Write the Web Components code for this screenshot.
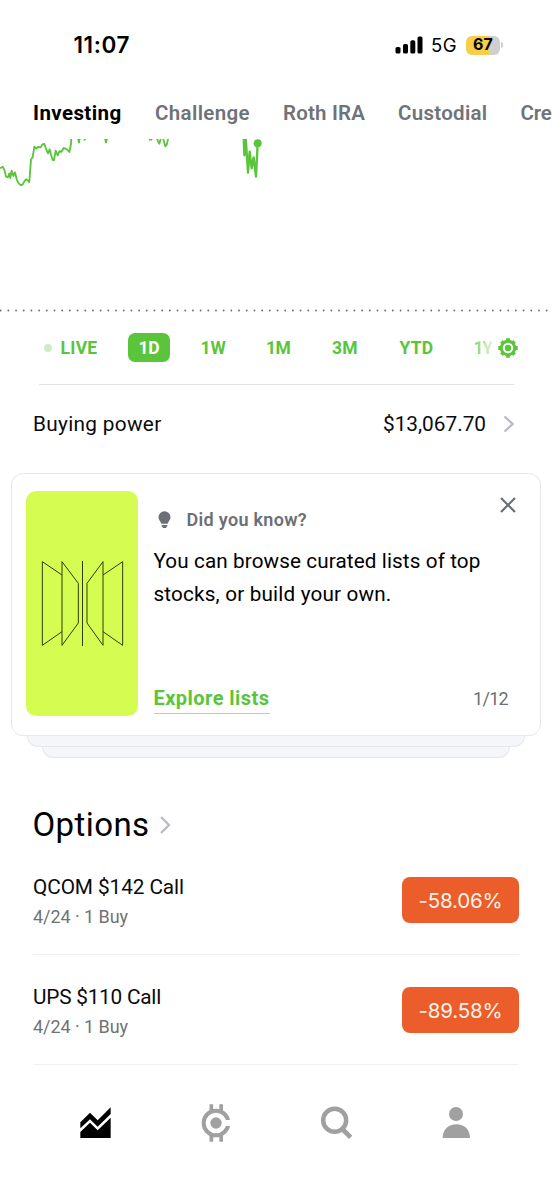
<!DOCTYPE html>
<html lang="en">
<head>
<meta charset="utf-8">
<title>Investing</title>
<style>
html,body{margin:0;background:#fff}
body{width:552px;height:1200px;overflow:hidden;font-family:Roboto,"Liberation Sans",sans-serif;color:#0a0b0c}
</style>
</head>
<body>
<invest-app></invest-app>
<script>
function define(name, html, setup) {
  const t = document.createElement('template');
  t.innerHTML = html;
  customElements.define(name, class extends HTMLElement {
    connectedCallback() {
      if (this.shadowRoot) return;
      this.attachShadow({mode: 'open'}).appendChild(t.content.cloneNode(true));
      if (setup) setup(this, this.shadowRoot);
    }
  });
}

/* A single line of text, tracked so that it occupies the width "w". */
define('fit-text', `<style>:host{display:block;flex:none;white-space:nowrap;line-height:1.2}span{display:inline-block}</style><span><slot></slot></span>`,
  (el, root) => {
    const w = parseFloat(el.getAttribute('w')), span = root.querySelector('span');
    const natural = span.getBoundingClientRect().width;
    el.style.letterSpacing = ((w - natural) / el.textContent.length) + 'px';
    el.style.width = w + 'px';
  });

define('status-bar', `<style>
:host{display:flex;align-items:center;height:90px;box-sizing:border-box;padding-left:73.500px;font-family:Inter,sans-serif;color:#000}
.time{font-size:22.5px;font-weight:600;padding-bottom:2px}
.bars{margin-left:264.500px;flex:none}
.net{font-size:18.5px;margin-left:8.500px}
.bat{margin-left:9px;width:34px;height:19px;border-radius:6px;background:linear-gradient(90deg,#f7ce46 67%,#cfcfd1 67%);display:flex;align-items:center;justify-content:center;font-size:16px;font-weight:700}
.tip{width:2px;height:6px;margin-left:1px;border-radius:0 2px 2px 0;background:#cfcfd1}
</style>
<fit-text class="time" w="56.500">11:07</fit-text>
<svg class="bars" width="28" height="18" viewBox="0 0 28 18"><rect x=".5" y="11" width="5" height="6.5" rx="1.6"/><rect x="8" y="8" width="5" height="9.500" rx="1.6"/><rect x="15.300" y="4.300" width="5" height="13.200" rx="1.6"/><rect x="22.500" y=".5" width="5" height="17" rx="1.6"/></svg>
<fit-text class="net" w="26">5G</fit-text>
<div class="bat"><fit-text w="20">67</fit-text></div><div class="tip"></div>`);

define('account-tabs', `<style>
:host{display:flex;align-items:center;gap:33px;height:46px;padding:0 0 3px 33px;overflow:hidden;font-size:20.500px;font-weight:600;color:#6f7377}
.on{color:#000;font-weight:700;margin-right:.5px}
</style>
<fit-text class="on" w="88.500">Investing</fit-text><fit-text w="95">Challenge</fit-text><fit-text w="82">Roth IRA</fit-text><fit-text w="89.500">Custodial</fit-text><fit-text w="31">Cre</fit-text>`);

define('price-chart', `<style>:host{display:block;height:186px}svg{display:block}</style>
<svg width="552" height="186" viewBox="0 357 1656 558" fill="none" stroke="#5ac53a" stroke-width="5.500" stroke-linejoin="round">
<path d="M0 445L8 440 14 452 18 470 24 472 28 460 31 474 35 452 40 468 45 457 50 478 56 490 62 495 68 494 74 482 79 478 84 482 88 486 93 418 98 412 103 380 109 386 114 381 122 382 127 373 133 372 138 386 144 400 149 388 153 404 158 420 162 420 167 392 173 406 179 393 184 396 191 384 197 386 203 390 208 396 213 372 214 350"/>
<path d="M233 350L237 368 240 350M251 359H257M314 350L318 368 322 350M447 359H457M469 350L474 364 478 371 484 350M488 350L496 379 500 374 506 350"/>
<path stroke-width="7" d="M731 350L733 406 737 352 744 458 749 395 755 445 761 412 768 470 773 370"/>
<circle cx="773" cy="370" r="12" fill="#5ac53a" stroke="none"/>
<path d="M2 871.500H1656" stroke="#696d70" stroke-width="5.500" stroke-linecap="round" stroke-dasharray="0 23.070"/>
</svg>`);

define('range-picker', `<style>
:host{display:flex;align-items:center;height:45px;padding-left:44px;font-size:17.500px;font-weight:700;color:#5ac53a}
fit-text{padding-top:1px}
i{width:8px;height:8px;border-radius:50%;background:#cdeec4;margin-right:8.500px}
.on{display:flex;align-items:center;justify-content:center;width:42px;height:29px;border-radius:7px;background:#5ac53a;color:#fff;margin:0 30.500px 0 30.500px}
.fade{-webkit-mask-image:linear-gradient(90deg,rgba(0,0,0,.75),rgba(0,0,0,.2));mask-image:linear-gradient(90deg,rgba(0,0,0,.75),rgba(0,0,0,.2))}
svg{margin-left:5.500px}
</style>
<i></i><fit-text w="37">LIVE</fit-text><div class="on"><fit-text w="21">1D</fit-text></div>
<fit-text w="25.500">1W</fit-text><fit-text w="24.500" style="margin-left:40px">1M</fit-text><fit-text w="26" style="margin-left:41.500px">3M</fit-text><fit-text w="34" style="margin-left:41.500px">YTD</fit-text><fit-text class="fade" w="18.500" style="margin-left:40px">1Y</fit-text>
<svg width="20" height="20" viewBox="-10 -10 20 20" fill="none" stroke="#5ac53a"><circle r="6.700" stroke-width="2.900"/><path stroke-width="3.800" d="M0-9.700V-7M0 9.700V7M-9.700 0H-7M9.700 0H7M-6.600-6.600L-5-5M6.600 6.600L5 5M-6.600 6.600L-5 5M6.600-6.600L5-5"/><circle r="3.200" fill="#5ac53a" stroke="none"/></svg>`);

define('buying-power', `<style>
:host{display:block;height:102.500px;box-sizing:border-box;padding-top:13.500px}
.rule{height:1.500px;margin:0 38px 0 38.500px;background:#e1e2e8}
.row{display:flex;align-items:center;height:77.500px;padding-left:33px;font-size:20.800px}
fit-text{padding-top:1px}
.amt{margin-left:221.500px}svg{margin-left:15.500px}
</style>
<div class="rule"></div><div class="row"><fit-text w="128.500">Buying power</fit-text><fit-text class="amt" w="103">$13,067.70</fit-text>
<svg width="14" height="20" viewBox="0 0 14 20" fill="none" stroke="#b7babe" stroke-width="2.200"><path d="M2.500 2.500L10.700 10 2.500 17.500"/></svg></div>`);

define('tip-card', `<style>
:host{display:block;padding-left:11px}
.card{box-sizing:border-box;width:530px;height:263.500px;border:1.500px solid #e7e8ed;border-radius:12px;background:#fff;display:flex;padding:17.500px 0 0 13.500px}
.art{width:112.500px;height:225px;border-radius:10px;background:#d5fd51;flex:none}
.body{margin-left:15.500px;width:365px;height:225px;display:flex;flex-direction:column}
.head{display:flex;height:54px;color:#6a7075;font-size:18px;font-weight:600}
.title{display:flex;align-items:center;height:49px;padding-top:4px}
.bulb{margin:0 15.500px 0 4.500px}
.x{margin:6px 0 0 193px}
.copy{font-size:20.700px;line-height:33px;color:#000}
.copy fit-text{line-height:33px}
.foot{margin-top:auto;height:32px;margin-bottom:2px;display:flex;align-items:flex-start}
.link{font-size:20px;font-weight:700;color:#5ac53a;line-height:31px;padding-top:1px;height:29.500px;border-bottom:1.500px solid #a3df93}
.count{font-size:18px;color:#6a7075;line-height:33px;margin-left:203.500px}
.edge{box-sizing:border-box;background:#f5f6fa;border:1.500px solid #e7e8ed;border-top:0;border-radius:0 0 11px 11px;height:11px}
.a{width:498px;margin-left:16px}.b{width:468px;margin-left:31px}
</style>
<div class="card"><div class="art"><svg width="112.500" height="225" viewBox="78 80 337.500 675" fill="none" stroke="#303b0c" stroke-width="3"><path d="M186 332L127 292V543L186 502M186 292V543L235 476V357ZM247.500 290V545M309 292V543L261 476V357ZM309 332L368 292V543L309 502"/></svg></div>
<div class="body"><div class="head"><div class="title"><svg class="bulb" width="13" height="18" viewBox="0 0 13 18" fill="#6a7075"><path d="M6.500.300A6 6 0 0 0 .500 6.300C.500 9 2.600 10.300 3.300 12.800H9.700C10.400 10.300 12.500 9 12.500 6.300A6 6 0 0 0 6.500.300ZM3.500 14.100H9.500V14.500L8 17H5L3.500 14.500Z"/></svg><fit-text w="120.500">Did you know?</fit-text></div>
<svg class="x" width="16" height="16" viewBox="0 0 16 16" fill="none" stroke="#6a7075" stroke-width="2.200"><path d="M1 1L15 15M15 1L1 15"/></svg></div>
<div class="copy"><fit-text w="327">You can browse curated lists of top</fit-text><fit-text w="238">stocks, or build your own.</fit-text></div>
<div class="foot"><fit-text class="link" w="116">Explore lists</fit-text><fit-text class="count" w="35">1/12</fit-text></div></div></div>
<div class="edge a"></div><div class="edge b"></div>`);

define('section-title', `<style>:host{display:flex;align-items:center;height:40px;margin-top:46.500px;padding-left:32.500px;font-size:33px;font-weight:400;color:#000}svg{margin-left:9.500px}</style>
<svg width="14" height="20" viewBox="0 0 14 20" fill="none" stroke="#b7babe" stroke-width="2.200"><path d="M2 2L10 10 2 18"/></svg>`,
  (el, root) => {
    const label = document.createElement('fit-text');
    label.setAttribute('w', '117');
    label.textContent = el.getAttribute('label');
    root.querySelector('svg').before(label);
  });

define('option-row', `<style>
:host{display:flex;height:110px;box-sizing:border-box;margin:0 33px;border-bottom:1px solid #eff0f2}
.text{width:369px}
.name{font-size:20.800px;line-height:28px;margin-top:28px}
.sub{font-size:18px;line-height:26px;color:#6f7377;margin-top:3px}
.badge{box-sizing:border-box;padding-top:3px;width:117px;height:46.500px;margin-top:32px;border-radius:8px;background:#eb5d2a;color:#fff3e8;display:flex;align-items:center;justify-content:center;font-family:Inter,sans-serif;font-weight:400;font-size:20.500px}
</style><div class="text"></div><div class="badge"></div>`,
  (el, root) => {
    const add = (parent, cls, text, w) => {
      const t = document.createElement('fit-text');
      t.className = cls; t.textContent = text; t.setAttribute('w', w);
      root.querySelector(parent).append(t);
    };
    add('.text', 'name', el.getAttribute('name'), el.getAttribute('name-w'));
    add('.text', 'sub', el.getAttribute('detail'), 95);
    add('.badge', '', el.getAttribute('change'), 84);
  });

define('tab-bar', `<style>:host{display:flex;box-sizing:border-box;padding:25px 0 0 60px;height:135px}svg{display:block;flex:none}.r{margin-left:40px}</style>
<svg width="200" height="70" viewBox="0 0 600 210"><path d="M61 97L90 68 113 91 152 52V72L113 110 90 88 61 115ZM61 126L90 98 113 121 152 83V144H61Z"/>
<g fill="none" stroke="#a0a0a0"><circle cx="468" cy="99" r="37" stroke-width="12"/><path stroke-width="11" d="M454 43V65M483.500 43V65M454 133V155M483.500 133V155"/></g><circle cx="468" cy="99" r="17" fill="#a0a0a0"/><path fill="#fff" d="M492 90H515V108H492Z"/></svg>
<svg class="r" width="200" height="70" viewBox="0 0 600 210"><g fill="none" stroke="#a0a0a0"><circle cx="104" cy="91" r="34.500" stroke-width="13.500"/><path stroke-width="14" d="M127 117L152 142"/></g><circle cx="468" cy="72" r="21" fill="#a0a0a0"/><path fill="#a0a0a0" d="M428 144C428 118 446 103 469 103S510 118 510 144Z"/></svg>`);

define('invest-app', `<style>:host{display:block;width:552px;height:1200px;overflow:hidden;background:#fff}</style>
<status-bar></status-bar><account-tabs></account-tabs><price-chart></price-chart><range-picker></range-picker><buying-power></buying-power><tip-card></tip-card>
<section-title label="Options"></section-title>
<option-row name="QCOM $142 Call" name-w="151" detail="4/24 · 1 Buy" change="-58.06%"></option-row>
<option-row name="UPS $110 Call" name-w="128" detail="4/24 · 1 Buy" change="-89.58%"></option-row>
<tab-bar></tab-bar>`);
</script>
</body>
</html>
